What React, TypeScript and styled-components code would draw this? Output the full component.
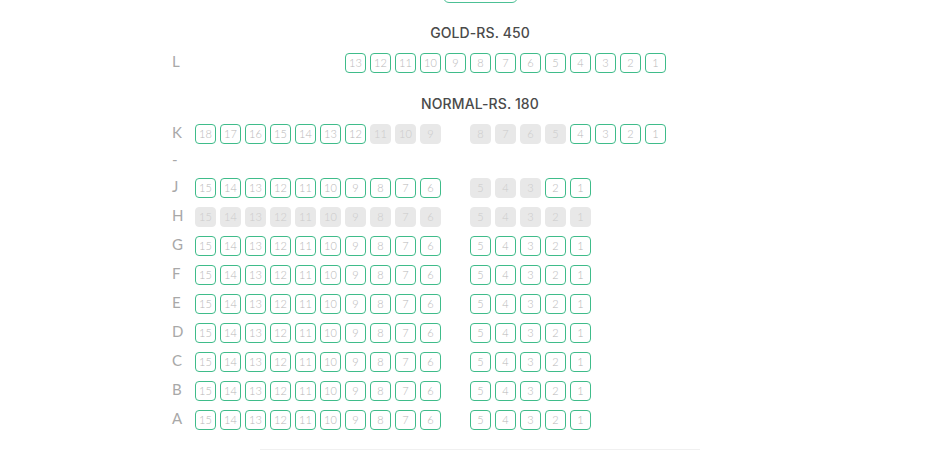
import styled, { createGlobalStyle } from "styled-components";

type SeatState = "open" | "taken";
type Seat = { no: number; state: SeatState } | null;

const GlobalStyle = createGlobalStyle`
  html, body {
    margin: 0;
    padding: 0;
    background: #fff;
    font-family: "Lato", "Liberation Sans", sans-serif;
  }
`;

const range = (from: number, to: number, state: SeatState): Seat[] => {
  const out: Seat[] = [];
  for (let i = from; i >= to; i--) out.push({ no: i, state });
  return out;
};

const blanks = (n: number): Seat[] => Array.from({ length: n }, () => null);

const fullRow = (): Seat[] => [
  ...range(15, 6, "open"),
  null,
  ...range(5, 1, "open"),
];

const sections: { title: string; rows: { label: string; seats: Seat[] }[] }[] = [
  {
    title: "GOLD-RS. 450",
    rows: [{ label: "L", seats: [...blanks(6), ...range(13, 1, "open")] }],
  },
  {
    title: "NORMAL-RS. 180",
    rows: [
      {
        label: "K",
        seats: [
          ...range(18, 12, "open"),
          ...range(11, 9, "taken"),
          null,
          ...range(8, 5, "taken"),
          ...range(4, 1, "open"),
        ],
      },
      { label: "-", seats: [] },
      {
        label: "J",
        seats: [
          ...range(15, 6, "open"),
          null,
          ...range(5, 3, "taken"),
          ...range(2, 1, "open"),
        ],
      },
      {
        label: "H",
        seats: [...range(15, 6, "taken"), null, ...range(5, 1, "taken")],
      },
      { label: "G", seats: fullRow() },
      { label: "F", seats: fullRow() },
      { label: "E", seats: fullRow() },
      { label: "D", seats: fullRow() },
      { label: "C", seats: fullRow() },
      { label: "B", seats: fullRow() },
      { label: "A", seats: fullRow() },
    ],
  },
];

const Page = styled.div`
  width: 616px;
  margin-left: 172px;
  display: flex;
  flex-direction: column;
  align-items: center;
`;

const TopButton = styled.div`
  width: 75px;
  height: 30px;
  margin-top: -27px;
  border: 1px solid #4cc095;
  border-radius: 6px;
  box-sizing: border-box;
`;

const Layout = styled.div`
  width: 100%;
  display: flex;
  flex-direction: column;
`;

const SectionTitle = styled.h3`
  margin: 20px 0 5px;
  height: 20px;
  line-height: 20px;
  text-align: center;
  font-family: "Inter", "Noto Sans", "Liberation Sans", sans-serif;
  font-size: 14px;
  font-weight: 500;
  color: #4a4a4a;
  letter-spacing: 0.1px;
`;

const Section = styled.div`
  & + & ${SectionTitle} {
    margin-top: 17px;
  }
`;

const Row = styled.div<{ $empty: boolean }>`
  display: flex;
  align-items: center;
  height: ${(p) => (p.$empty ? 25 : 29)}px;
`;

const RowLabel = styled.div`
  width: 23px;
  flex-shrink: 0;
  margin-top: -4px;
  font-size: 15px;
  color: #a8a8a8;
`;

const Seats = styled.div`
  display: flex;
  gap: 4px;
`;

const SeatBox = styled.div<{ $state?: SeatState }>`
  width: 21px;
  height: 20px;
  box-sizing: border-box;
  border-radius: 4px;
  display: flex;
  align-items: center;
  justify-content: center;
  font-size: 11px;
  font-weight: 300;
  color: ${(p) => (p.$state === "taken" ? "#cbcbcb" : "#b8b8b8")};
  border: 1px solid
    ${(p) =>
      p.$state === "open"
        ? "#3fbc8a"
        : p.$state === "taken"
          ? "#e8e8e8"
          : "transparent"};
  background: ${(p) => (p.$state === "taken" ? "#e8e8e8" : "transparent")};
`;

const Divider = styled.div`
  width: 440px;
  height: 1px;
  margin-top: 15px;
  background: #f0f0f0;
`;

export default function App() {
  return (
    <>
      <GlobalStyle />
      <Page>
        <TopButton />
        <Layout>
          {sections.map((section) => (
            <Section key={section.title}>
              <SectionTitle>{section.title}</SectionTitle>
              {section.rows.map((row) => (
                <Row key={row.label} $empty={row.seats.length === 0}>
                  <RowLabel>{row.label}</RowLabel>
                  <Seats>
                    {row.seats.map((seat, i) =>
                      seat ? (
                        <SeatBox key={i} $state={seat.state}>
                          {seat.no}
                        </SeatBox>
                      ) : (
                        <SeatBox key={i} />
                      )
                    )}
                  </Seats>
                </Row>
              ))}
            </Section>
          ))}
        </Layout>
        <Divider />
      </Page>
    </>
  );
}
